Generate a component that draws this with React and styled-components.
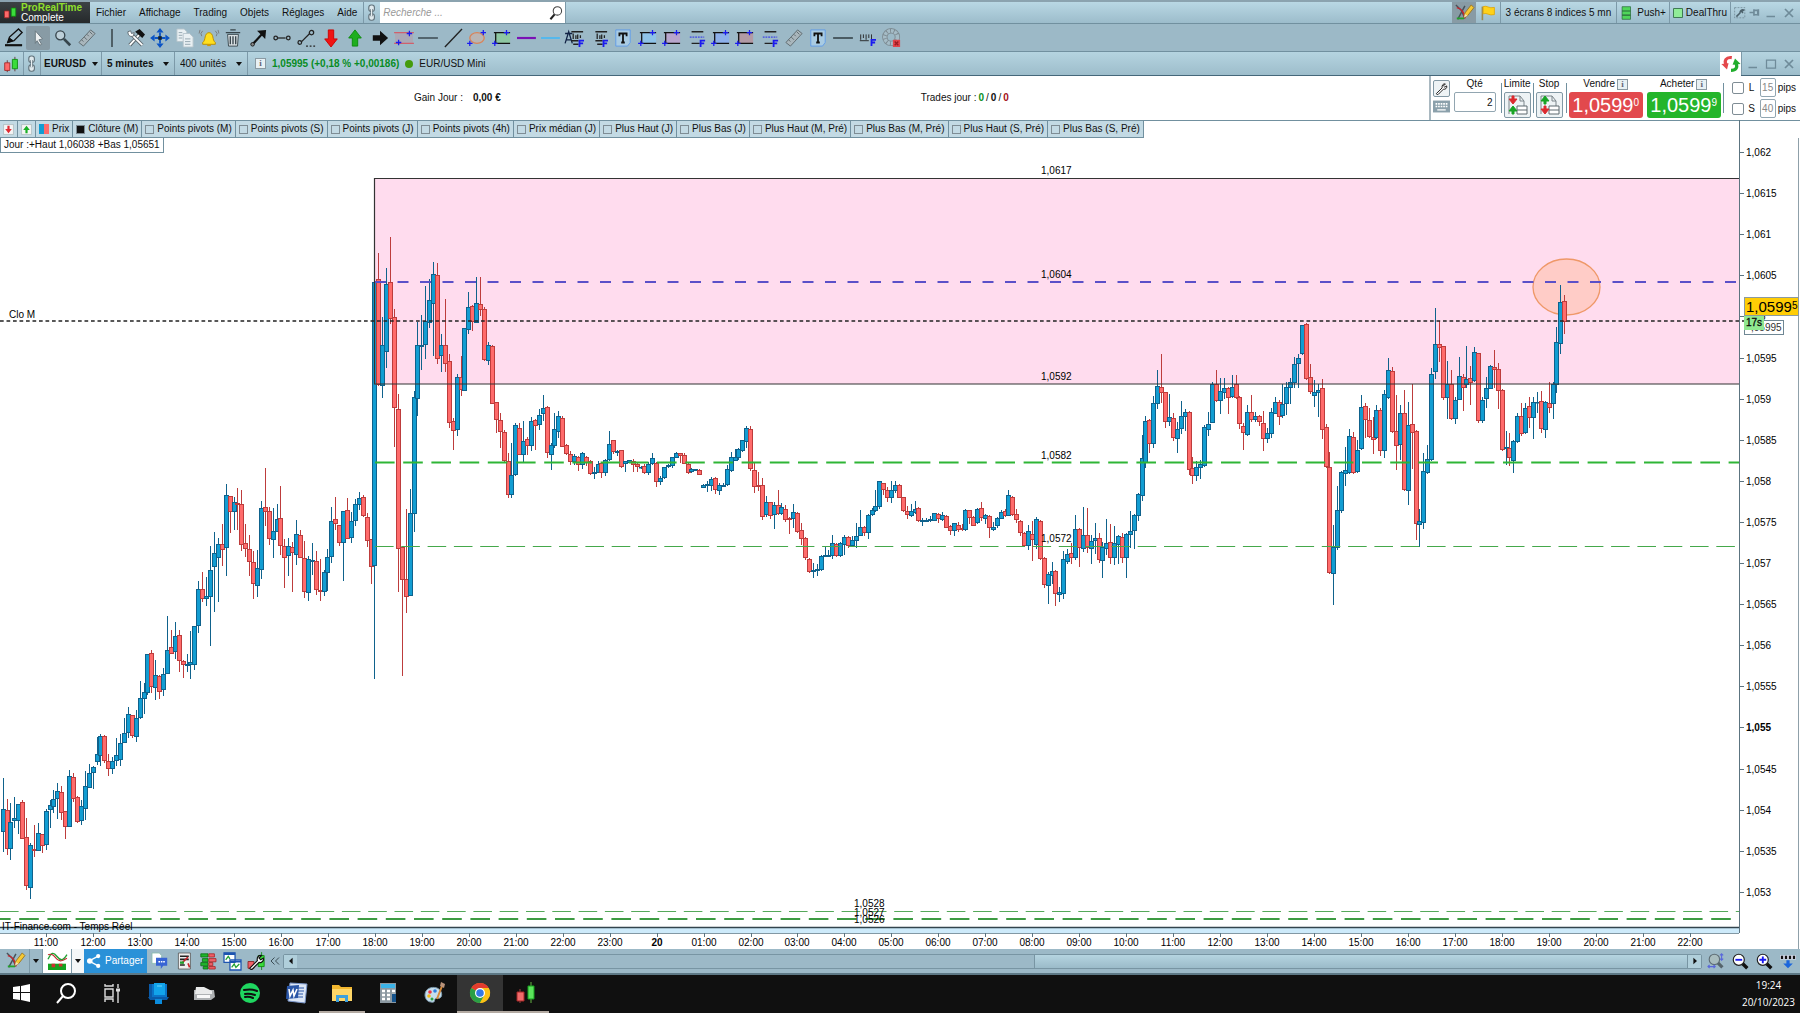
import React, { useState } from 'react';
import styled, { createGlobalStyle } from 'styled-components';

const GlobalStyle = createGlobalStyle`
  * { box-sizing: border-box; }
  body {
    margin: 0;
    background: #fff;
    color: #111;
    font: 10px/12px "Liberation Sans", Arial, sans-serif;
  }
  button, input, select {
    font: inherit;
    color: inherit;
    margin: 0;
    padding: 0;
    border: 0;
    border-radius: 0;
    background: none;
  }
  svg { display: block; overflow: visible; flex: none; }
`;

const Page = styled.div`
  min-height: 100vh;
  display: flex;
  flex-direction: column;
`;

const MenuBar = styled.header`
  display: flex;
  align-items: stretch;
  height: 24px;
  background: linear-gradient(#b9d8e4, #9cbccb);
  border-top: 2px solid #8ba3af;
  border-bottom: 1px solid #71909f;
`;

const Brand = styled.div`
  display: flex;
  align-items: center;
  gap: 3px;
  width: 90px;
  padding-left: 3px;
  background: linear-gradient(#3c4244, #25292b);
  color: #fff;
  line-height: 10px;
`;

const BrandName = styled.div`
  color: #8ede2c;
  font-weight: bold;
`;

const Menu = styled.nav`
  display: flex;
  align-items: center;
  gap: 13px;
  padding: 0 6px;
`;

const MenuLink = styled.a`
  color: #111;
  text-decoration: none;
`;

const Cell = styled.div`
  display: flex;
  align-items: center;
  gap: 3px;
  padding: 0 ${p => (p.$pad === undefined ? 3 : p.$pad)}px;
  border-left: 1px solid #7c99a8;
`;

const SearchBox = styled.label`
  display: flex;
  align-items: center;
  width: 186px;
  padding: 0 2px 0 3px;
  background: #fff;
  border-right: 1px solid #7c99a8;
`;

const SearchInput = styled.input`
  flex: 1;
  min-width: 0;
  outline: none;
  font-style: italic;
  &::placeholder { color: #999; opacity: 1; }
`;

const Spacer = styled.div`
  flex: 1;
`;

const IconButton = styled.button`
  display: flex;
  align-items: center;
  justify-content: center;
  flex: none;
  width: ${p => p.$w || 24}px;
  height: ${p => p.$h || 24}px;
  background: ${p => (p.$on ? '#889ba5' : 'none')};
  border-radius: ${p => (p.$round ? 2 : 0)}px;
`;

const MenuButton = styled(IconButton)`
  height: auto;
`;

const ToolBar = styled.div`
  height: 28px;
  background: #9cb9c7;
  border-bottom: 1px solid #71909f;
  padding: 2px;
`;

const Tools = styled.div`
  display: flex;
  justify-content: space-between;
  max-width: 902px;
`;

const ChartBar = styled.div`
  display: flex;
  align-items: stretch;
  height: 24px;
  background: linear-gradient(#b5d4e0, #9dbdcb);
  border-bottom: 1px solid #45677a;
`;

const Picker = styled.label`
  display: flex;
  align-items: center;
  gap: ${p => (p.$tight ? 5 : 9)}px;
  padding: 0 ${p => (p.$tight ? 3 : 5)}px;
  border-left: 1px solid #7c99a8;
`;

const PickerSelect = styled.select`
  appearance: none;
  font-weight: ${p => (p.$bold ? 'bold' : 'normal')};
  outline: none;
`;

const Caret = styled.span`
  width: 0;
  border: 3px solid transparent;
  border-top: 4px solid #111;
  border-bottom: 0;
`;

const InfoMark = styled.span`
  display: inline-flex;
  align-items: center;
  justify-content: center;
  width: 11px;
  height: 11px;
  border: 1px solid #8a9aa3;
  background: #e8f1f4;
  color: #667;
  font: bold 9px/9px "Liberation Serif", serif;
`;

const Quote = styled.div`
  display: flex;
  align-items: center;
  gap: 6px;
  padding-left: 7px;
  border-left: 1px solid #7c99a8;
`;

const Change = styled.b`
  color: #088c24;
`;

const Dot = styled.i`
  width: 8px;
  height: 8px;
  border-radius: 50%;
  background: #459c0c;
`;

const Refresh = styled(IconButton)`
  background: #fff;
  width: 21px;
`;

const TradeBar = styled.section`
  display: flex;
  height: 45px;
  border-bottom: 1px solid #71909f;
`;

const Stats = styled.div`
  flex: 1;
  display: flex;
  align-items: center;
`;

const Stat = styled.div`
  display: flex;
  gap: ${p => p.$gap}px;
  padding-left: ${p => p.$from}px;
`;

const Trades = styled.b`
  color: ${p => p.$color || '#111'};
`;

const Order = styled.form`
  display: flex;
  align-items: stretch;
  border-left: 2px solid #a9b8c0;
`;

const Column = styled.div`
  display: flex;
  flex-direction: column;
  align-items: center;
  gap: 2px;
  padding: ${p => p.$top || 2}px 2px 0;
  margin-right: ${p => p.$after || 0}px;
`;

const OrderLabel = styled.label`
  display: flex;
  align-items: center;
  gap: 2px;
`;

const QtyInput = styled.input`
  width: 42px;
  height: 20px;
  padding-right: 2px;
  border: 1px solid #92a6b1;
  border-radius: 2px;
  text-align: right;
`;

const SmallButton = styled(IconButton)`
  border: 1px solid #8298a4;
  border-radius: 2px;
  background: #eef3f5;
`;

const Rule = styled.div`
  width: 1px;
  margin: 7px 0;
  background: #71909f;
`;

const PriceButton = styled.button`
  width: 74px;
  height: 26px;
  border-radius: 3px;
  background: ${p => (p.$buy ? '#24b52b' : '#e2494d')};
  color: #fff;
  font-size: 20px;
  line-height: 26px;
  text-align: center;
  white-space: nowrap;
`;

const Tenth = styled.sup`
  font-size: 10px;
  line-height: 10px;
  vertical-align: 6px;
`;

const Limits = styled.div`
  display: flex;
  flex-direction: column;
  justify-content: center;
  gap: 2px;
  padding: 0 4px 0 8px;
`;

const LimitRow = styled.div`
  display: flex;
  align-items: center;
  gap: 2px;
`;

const Tick = styled.input`
  appearance: none;
  flex: none;
  width: ${p => p.$size || 9}px;
  height: ${p => p.$size || 9}px;
  border: 1px solid #7f8d95;
  border-radius: ${p => (p.$size ? 2 : 0)}px;
  background: ${p => p.$fill || 'transparent'};
  &:checked { background: ${p => p.$fill || '#111'}; }
`;

const LimitName = styled.label`
  width: 12px;
  text-align: center;
`;

const PipInput = styled.input`
  width: 16px;
  height: 19px;
  border: 1px solid #92a6b1;
  border-radius: 2px;
  color: #888;
  text-align: center;
`;

const Indicators = styled.div`
  display: flex;
  align-items: stretch;
  align-self: flex-start;
  height: 17px;
  background: #c3dae4;
  border-bottom: 1px solid #71909f;
`;

const Indicator = styled.label`
  display: flex;
  align-items: center;
  gap: 3px;
  padding: 0 3px;
  border-right: 1px solid #71909f;
  white-space: nowrap;
`;

const ArrowButton = styled(IconButton)`
  width: 18px;
  height: 16px;
  border-right: 1px solid #71909f;
`;

const ChartArea = styled.main`
  position: relative;
  flex: 1;
`;

const DayRange = styled.div`
  position: absolute;
  top: 0;
  left: 0;
  padding: 1px 3px;
  background: #fff;
  border: 1px solid #71909f;
  border-top: 0;
`;

const ChartSvg = styled.svg`
  width: 100%;
  height: auto;
  font: 10px "Liberation Sans", Arial, sans-serif;
`;

const BottomBar = styled.div`
  display: flex;
  align-items: center;
  height: 26px;
  background: #9cb9c7;
  border-bottom: 2px solid #5d7885;
`;

const DropButton = styled(IconButton)`
  width: 13px;
  background: ${p => (p.$light ? '#f4f7f8' : 'none')};
  border-left: 1px solid #7c99a8;
`;

const GraphButton = styled(IconButton)`
  width: 29px;
  background: #fff;
  border-left: 1px solid #7c99a8;
`;

const Share = styled.button`
  display: flex;
  align-items: center;
  gap: 4px;
  width: 63px;
  height: 24px;
  margin-right: 1px;
  padding-left: 3px;
  background: #2a91d8;
  color: #fff;
`;

const Scroll = styled.div`
  flex: 1;
  display: flex;
  height: 15px;
  margin: 0 2px 0 1px;
  border: 1px solid #7895a3;
  border-radius: 2px;
`;

const ScrollTrack = styled.div`
  flex: 1;
  display: flex;
  justify-content: flex-end;
`;

const ScrollThumb = styled.div`
  width: 47%;
  border: 1px solid #7895a3;
  border-width: 0 1px;
  background: linear-gradient(#b5d4e0, #9bbbc9);
`;

const ScrollButton = styled(IconButton)`
  width: 13px;
  height: 13px;
  background: #b0cfdb;
`;

const TaskBar = styled.footer`
  display: flex;
  align-items: stretch;
  height: 38px;
  padding-right: 5px;
  background: #101010;
  color: #fff;
`;

const Task = styled.button`
  display: flex;
  align-items: center;
  justify-content: center;
  width: 46px;
  background: ${p => (p.$active ? '#343434' : 'none')};
  border-bottom: 2px solid ${p => (p.$open ? '#b3aaa2' : 'transparent')};
  &:first-child { width: 43px; }
`;

const Clock = styled.div`
  display: flex;
  flex-direction: column;
  justify-content: center;
  text-align: center;
  font: 10px/17px "Open Sans", "Noto Sans", sans-serif;
`;

/* ---------- icons ---------- */

const Icon = ({ size = 20, children }) => (
  <svg width={size} height={size} viewBox="0 0 20 20" fill="none" aria-hidden="true">{children}</svg>
);

const blue = '#1a1af0';
const Plus = ({ x, y }) => <path d={`M${x - 3} ${y}h6M${x} ${y - 3}v6`} stroke={blue} strokeWidth="1.4" />;
const FMark = ({ x = 14, y = 12 }) => <path d={`M${x} ${y + 8}v-7h5M${x} ${y + 4}h4`} stroke={blue} strokeWidth="2" />;
const Ruler = () => (
  <g stroke="#5b666b">
    <path d="M1 15 14 1l5 4L6 19z" fill="#a9b6bc" />
    <path d="m4 12 2 2m1-5 3 3m0-6 2 2m1-5 3 3" />
  </g>
);
const TBox = () => (
  <g>
    <path d="M2 1h16v14l-3 4H2z" fill="#a9cbe2" stroke="#5f9bea" />
    <path d="M6 8V5h8v3M10 5v10m-2 0h4" stroke="#111" strokeWidth="2" />
  </g>
);
const Span = ({ fill }) => (
  <g>
    <path d="M2 4h17v12H2z" fill={fill} />
    <path d="M1 4h18M2 16h17M3 4v12" stroke="#111" strokeWidth="1.4" />
    <Plus x={15} y={4} /><Plus x={2} y={16} />
  </g>
);
const Fib = () => (
  <g>
    <path d="M4 3h13M4 16h9" stroke="#222" strokeWidth="1.6" />
    <path d="M2 9h16" stroke={blue} strokeDasharray="2 1" />
    <FMark />
  </g>
);
const Levels = ({ a }) => (
  <g>
    {a && <path d="m-1 16 4-13 4 13M-1 5h8M0 12h6" stroke="#124" strokeWidth="1.4" />}
    <path d="M6 3h13M6 13h8M8 17h6" stroke="#222" strokeWidth="1.6" />
    <path d="M8 5v6m3-4v4m2-5v5m3-4v3" stroke="#222" strokeWidth="1.4" />
    <FMark x={15} />
  </g>
);
const Bars = () => (
  <g>
    <path d="M5 5v14M14 1v17" stroke="#5a2c2c" />
    <path d="M2 8h6v9H2z" fill="#ff6a6a" stroke="#a32525" />
    <path d="M11 4h6v11h-6z" fill="#3bdc3b" stroke="#0c8a0c" />
  </g>
);
const Chain = () => (
  <g stroke="#60717a" strokeWidth="1.4" fill="#dfe9ed">
    <rect x="6" y="0" width="7" height="8" rx="3" />
    <rect x="6" y="11" width="7" height="8" rx="3" />
    <path d="M9.500 5v9" strokeWidth="3" />
    <path d="M9.500 5v9" stroke="#eef5f7" />
  </g>
);
const Compass = () => (
  <g>
    <path d="m1 1 6 6 4 9M11 2 3 17" stroke="#47525a" strokeWidth="1.6" />
    <path d="M2 4c5 1 8 5 9 12" stroke="#c3272e" strokeWidth="1.6" />
    <path d="M2 16h8" stroke="#22a32b" strokeWidth="2" />
    <path d="m10 15 1-5 7-9 3 3-7 9z" fill="#f6c932" stroke="#9a741d" />
    <path d="m10 15 1-4 3 2z" fill="#f7dfb9" />
  </g>
);
const Copy = () => (
  <g fill="#e9f0f3" stroke="#b4c3cb">
    <path d="M1 0h8l3 3v11H1z" /><path d="M8 5h7l4 4v11H8z" />
    <path d="M3 4h4m-4 3h4m-4 3h4m3 1h6m-6 3h6m-6 3h6" stroke="#8fa2ac" />
  </g>
);
const Wrench = () => (
  <path d="m3 17 8-8c-1-4 2-7 5-6l-3 3 2 2 3-2c1 3-2 6-5 5l-8 8c-2 1-4-1-2-2z" fill="#fff" stroke="#111" strokeWidth="1.4" />
);
const Zoom = ({ sign, faded }) => (
  <g opacity={faded ? 0.5 : 1}>
    <path d="m12 12 6 6" stroke="#111" strokeWidth="4" />
    <circle cx="8" cy="8" r="6.500" fill={faded ? '#b7c2b7' : '#fff'} stroke="#222" strokeWidth="1.4" />
    {sign && <path d={sign === '+' ? 'M4 8h8M8 4v8' : 'M4 8h8'} stroke={blue} strokeWidth="2.200" />}
    {faded && <path d="M17 1v8m-2-6 2-2 2 2m-4 4 2 2 2-2M0 17h9m-7-2-2 2 2 2m5-4 2 2-2 2" stroke={blue} strokeWidth="1.400" />}
  </g>
);

const tools = [
  ['Crayon', <g stroke="#111"><path d="m3 15 2-6 10-9 4 4-9 9z" strokeWidth="1.500" /><path d="m3 15 2-5 4 3z" fill="#111" /><path d="M0 18h19" strokeWidth="2.400" /></g>],
  ['Curseur', <path d="m7 2 8 9-4 1 3 5-2 1-3-5-2 3z" fill="#eef1f2" stroke="#66757d" />, true],
  ['Loupe', <g><circle cx="7" cy="7" r="5" fill="#bdd0d9" stroke="#37454c" strokeWidth="1.500" /><path d="m11 11 7 7" stroke="#37454c" strokeWidth="3" /></g>],
  ['Règle', <Ruler />],
  ['Séparateur', <path d="M10 0v20" stroke="#333d42" strokeWidth="1.600" />],
  ['Outils', <g><path d="m3 18 11-12" stroke="#555f64" strokeWidth="4" /><path d="m3 18 11-12" stroke="#fff" strokeWidth="2" /><path d="m9 3 5-3 6 6-3 4z" fill="#111" /><path d="m6 7 11 11" stroke="#5c686e" strokeWidth="4" /><path d="m6 7 11 11" stroke="#fff" strokeWidth="2" /><path d="M1 3c0 4 2 6 6 5l1-4-3 1-1-3z" fill="#fff" stroke="#5c686e" /></g>],
  ['Déplacer', <g fill="#0b54c5"><path d="M10 4v12M4 10h12" stroke="#0b54c5" strokeWidth="2" /><path d="M8 8h4v4H8z" fill="#123" /><path d="m10-1 4 5H6zM10 21l4-5H6zM-1 10l5-4v8zM21 10l-5-4v8z" /></g>],
  ['Copier', <Copy />],
  ['Alerte', <g><path d="M3 15c4-3 1-10 7-11 6 1 3 8 7 11v2H3z" fill="#ffdf1e" stroke="#b58a00" /><path d="M8 17h4v2H8z" fill="#d39b00" /><path d="M3 2 1 5l1 3M0 1l-1 4m18-3 2 3-1 3m2-7 1 4" stroke="#777" /></g>],
  ['Corbeille', <g><path d="M4 6h12l-1 13H5z" fill="#d8dfe2" stroke="#37444a" /><path d="M2 4h16M7 1h6M7 8v9m3-9v9m3-9v9" stroke="#37444a" strokeWidth="1.500" /></g>],
  ['Flèche', <g><path d="M4 17 16 4" stroke="#111" strokeWidth="2.400" /><path d="m9 2 10-1-1 10z" fill="#111" /><circle cx="4" cy="17" r="2" fill="#888" stroke="#111" /></g>],
  ['Segment', <g stroke="#222" strokeWidth="1.400"><path d="M5 10h9" /><circle cx="3" cy="10" r="2" /><circle cx="17" cy="10" r="2" /></g>],
  ['Demi-droite', <g stroke="#222" strokeWidth="1.400"><path d="m4 14 9-9" /><circle cx="2" cy="15" r="2" /><circle cx="15" cy="4" r="2.400" /><path d="M9 19h11" strokeDasharray="2 2" /></g>],
  ['Flèche baisse', <path d="M7 1h6v10h4l-7 9-7-9h4z" fill="#f01414" stroke="#c00" />],
  ['Flèche hausse', <path d="M7 19h6V10h4l-7-9-7 9h4z" fill="#1fae1f" stroke="#0a8a0a" />],
  ['Flèche droite', <path d="M2 7h8V2l9 8-9 8v-5H2z" fill="#111" />],
  ['Canal', <g><path d="M0 4h20v12H0z" fill="#aaa9b6" /><path d="M-1 4h22M-1 16h22" stroke="#d0606b" strokeWidth="1.500" /><Plus x={16} y={5} /><Plus x={4} y={15} /></g>],
  ['Horizontale', <path d="M-1 10h22" stroke="#37454c" strokeWidth="1.600" />],
  ['Oblique', <path d="M1 20 20 0" stroke="#222" strokeWidth="1.500" />],
  ['Ellipse', <g><ellipse cx="10" cy="10" rx="8" ry="6" stroke="#d8845a" strokeWidth="1.500" fill="#b9b5b4" /><Plus x={17} y={4} /><Plus x={2} y={16} /></g>],
  ['Rectangle vert', <Span fill="#8ec7a2" />],
  ['Ligne violette', <path d="M0 10h21" stroke="#7a12b5" strokeWidth="2.400" />],
  ['Ligne bleue', <path d="M0 10h21" stroke="#45b8f5" strokeWidth="1.800" />],
  ['Auto Fibonacci', <Levels a />],
  ['Niveaux', <Levels />],
  ['Texte', <TBox />],
  ['Zone bleue', <Span fill="#8fc3e8" />],
  ['Zone mauve', <Span fill="#b8a6cc" />],
  ['Fibonacci', <Fib />],
  ['Zone azur', <Span fill="#8db0ea" />],
  ['Zone brune', <Span fill="#b29aa5" />],
  ['Fibonacci 2', <Fib />],
  ['Règle 2', <Ruler />],
  ['Texte 2', <TBox />],
  ['Ligne', <path d="M-1 10h22" stroke="#37454c" strokeWidth="1.800" />],
  ['Cycles', <g><path d="M3 6v6m3-6v4m3-4v6m3-6v4m3-4v6" stroke="#222" /><path d="M2 13h10" stroke="#222" /><FMark x={15} y={11} /></g>],
  ['Effacer', <g><circle cx="9" cy="9" r="7" stroke="#7d8b92" strokeWidth="6" /><circle cx="9" cy="9" r="7" stroke="#a5bcc7" strokeWidth="4" strokeDasharray="3 1" /><path d="M11 12h8v8h-8z" fill="#e0444a" /><path d="m13 14 4 4m0-4-4 4" stroke="#9b1c22" strokeWidth="1.500" /></g>],
];

const tasks = [
  ['Démarrer', <path d="m1 4 7-1v6H1zm8-1 9-2v8H9zM1 10h7v7l-7-1zm8 0h9v9l-9-2z" fill="#fff" />],
  ['Rechercher', <g stroke="#fff" strokeWidth="2"><circle cx="12" cy="8" r="7" /><path d="m7 13-6 7" /></g>],
  ['Vue des tâches', <g stroke="#ddd" strokeWidth="1.400"><path d="M3 6h8v8H3zM3 1v2h8V1M3 19v-3h8v3M16 1v4m0 3v12" /><path d="M14 7h4" strokeWidth="3" /></g>],
  ['Téléphone', <g><path d="M3 1h16v15H3z" fill="#0a74c8" /><path d="M1 1h3v15H1zM0 14h21l-2 3H2z" fill="#0a5ba9" /><path d="M6 0h11v12H6z" fill="#12a4ea" /><path d="M7 16h7v5H7z" fill="#0b8bdb" /><path d="M9 3h5" stroke="#6fd5fa" /></g>],
  ['Imprimante', <g><path d="M0 7h20l1 7-4 3H0z" fill="#aeb1b3" /><path d="M2 4h8l8 4v3H1z" fill="#e9eaea" /><path d="M3 12h13v3H3z" fill="#f8f8f8" /></g>],
  ['Spotify', <g><circle cx="10" cy="10" r="10" fill="#1fd760" /><path d="M4 7c5-1 9-1 13 1M5 11c4-1 7 0 10 1M5 14c4-1 6 0 8 1" stroke="#101010" strokeWidth="2" strokeLinecap="round" /></g>],
  ['Word', <g><path d="m4 0 17 1-2 19-17-2z" fill="#dce6f6" stroke="#7995c8" /><path d="M12 5h6m-6 3h6m-6 3h5m-5 3h5" stroke="#2b57a8" /><path d="m1 3 12-1-1 13-12 1z" fill="#2b57a8" /><path d="m3 6 1 7 3-6 1 6 3-7" stroke="#fff" strokeWidth="1.600" /></g>],
  ['Explorateur', <g><path d="M0 2h7l2 2h11v14H0z" fill="#f3b72f" /><path d="M0 6h20v12H0z" fill="#ffd667" /><path d="M4 12h12v7h-3v-4H7v4H4z" fill="#3fa1dc" /></g>, 'open'],
  ['Calculatrice', <g><path d="M2 0h16v20H2z" fill="#8b98a1" /><path d="M3 1h14v4H3z" fill="#3bb3e8" /><path d="M4 8h3m2 0h3m2 0h3M4 12h3m2 0h3m2 0h3M4 16h3m2 0h3" stroke="#fff" strokeWidth="2.400" /><path d="M14 11h4v8h-4z" fill="#15538c" /></g>],
  ['Paint', <g><path d="M1 12C1 6 7 3 13 5c5 2 6 8 3 10-2 1-4-1-5 1s0 4-4 3c-4 0-6-4-6-7z" fill="#c6ddec" stroke="#7d9cb0" /><circle cx="6" cy="9" r="1.800" fill="#e34" /><circle cx="11" cy="8" r="1.800" fill="#2a7de0" /><circle cx="5" cy="13" r="1.800" fill="#f5b915" /><circle cx="8" cy="16" r="1.500" fill="#2aa545" /><path d="M13 16 18 3" stroke="#d58a3a" strokeWidth="2" /><path d="m16 3 1-4 4 2-1 4z" fill="#b9937a" /></g>],
  ['Chrome', <g><circle cx="10" cy="10" r="10" fill="#fbc116" /><path d="M10 10 1.300 5A10 10 0 0 1 18.700 5z" fill="#e33b2e" /><path d="M10 10 1.300 5A10 10 0 0 0 10 20l4-7z" fill="#2a9f47" /><path d="M18.700 5H10v5l4 3-4 7A10 10 0 0 0 18.700 5z" fill="#fbc116" /><circle cx="10" cy="10" r="5" fill="#fff" /><circle cx="10" cy="10" r="3.800" fill="#3278e6" /></g>, 'active'],
  ['ProRealTime', <g><path d="M4 6v14M15-1v21" stroke="#9b4040" /><path d="M1 9h7v9H1z" fill="#f06a6a" stroke="#a32525" /><path d="M15-1v21" stroke="#1f9b2a" /><path d="M12 3h6v13h-6z" fill="#5be35b" stroke="#14a01c" /></g>, 'open'],
];

/* ---------- chart ---------- */

// direction, high, body top, body bottom, low (one 5 minute bar each)
const BARS = `
u778,809,831,851 d799,810,848,854 u803,822,848,859 u797,818,820,827 u804,804,820,833 d800,802,838,838 d818,837,885,889 u843,845,887,898
d825,849,850,856 u823,833,850,850 d834,834,845,852 u809,811,844,849 u800,805,809,827 u790,799,806,812 u783,791,798,818 d786,792,812,819
d811,811,826,838 u770,776,826,826 d773,777,798,801 d796,797,821,822 u800,806,820,824 u771,786,808,819 u764,773,787,787 u766,767,772,788
u737,754,761,764 u734,736,755,765 d735,736,760,762 d754,761,768,775 u757,761,768,773 u738,755,760,765 u734,743,759,765 u718,733,742,742
u707,714,732,737 d715,715,735,737 u710,718,736,741 u681,698,717,718 u683,692,698,713 u654,654,692,694 d650,653,686,692 u660,675,687,699
d675,676,691,698 u668,674,689,695 u616,650,673,673 d630,647,653,653 u622,636,651,658 d630,635,660,671 d660,661,664,677 u654,664,665,671
u631,662,664,678 u626,626,664,669 u581,589,625,632 d572,589,598,601 u577,596,598,605 u546,570,596,645 u532,553,566,611 u538,544,557,601
d524,544,549,565 u484,495,547,575 d496,496,511,532 u497,502,511,529 d488,503,504,529 d490,504,544,550 d524,543,548,556 d535,549,561,575
d551,562,583,598 u550,568,585,596 u501,508,569,578 d468,507,511,525 d507,511,538,544 u508,531,539,557 u504,519,531,531 d486,518,545,554
d539,546,557,587 u538,546,555,575 d542,547,552,591 u520,534,554,564 d530,535,557,557 d541,558,591,597 u556,559,592,600 u543,560,561,574
d551,561,589,594 d559,590,591,600 u570,572,591,595 u549,557,572,590 u507,521,556,562 d497,519,523,529 d525,525,542,545 u511,511,542,580
d498,510,538,538 u512,521,537,542 u499,504,520,525 u492,498,504,509 d495,497,515,516 d513,517,540,546 d539,539,566,583 u282,282,565,678
d253,279,384,385 u317,345,385,397 u268,284,351,367 d237,282,318,323 d309,317,407,446 d394,409,548,591 d547,547,579,675 d509,579,596,612
u489,513,595,595 u391,397,513,531 u322,345,398,415 u315,345,346,369 u286,321,344,358 u279,300,322,327 u262,274,303,355 d263,275,358,363
u334,345,355,371 d299,345,363,371 d354,361,422,427 d418,421,430,449 u374,377,429,435 d356,377,389,395 u328,328,390,390 u292,307,329,333
d305,306,321,330 u277,303,322,322 d277,304,309,315 d307,309,359,360 u342,345,360,364 d345,346,403,403 d402,402,419,432 d413,420,431,447
d430,432,460,461 d453,461,494,497 u443,475,494,497 u423,425,474,475 d423,428,454,454 u421,441,454,462 d437,439,445,454 u417,421,445,450
d419,420,425,449 u409,415,424,429 u395,408,413,420 d406,407,452,457 u443,445,454,469 u413,429,445,447 u411,416,431,437 d416,418,446,446
d444,445,453,454 d451,454,461,464 u454,456,461,464 d456,457,464,470 u452,453,464,468 d456,457,462,465 d460,461,473,474 u467,472,473,478
u461,464,472,472 d462,463,472,477 u459,460,472,475 u431,444,459,460 d440,440,451,453 u450,451,452,455 d450,450,466,467 u461,461,463,471
u460,460,462,462 d459,461,464,471 d462,464,466,471 u466,467,467,468 d464,466,472,473 u462,464,472,474 u453,458,463,464 d462,463,481,486
u476,478,481,484 u467,467,477,478 u464,465,466,467 u457,457,465,467 u452,453,457,457 d453,453,455,462 d453,455,463,463 d463,464,472,473
u468,469,471,472 u469,469,470,470 d469,470,474,474 u484,485,487,487 u481,484,485,491 u477,479,485,490 d477,478,489,493 u483,485,490,494
u483,485,486,486 u465,469,484,485 u452,457,470,471 u449,457,460,460 u448,449,457,459 u440,440,450,451 u426,428,441,447 d426,429,468,470
d462,470,486,492 d472,485,486,490 d478,485,516,519 u496,502,514,516 d502,502,515,518 u502,505,514,528 d490,505,513,514 u503,507,513,514
d505,509,519,521 d517,518,519,533 u504,512,518,527 d512,513,531,532 d523,530,538,544 d537,538,557,559 d558,559,571,572 u563,570,571,577
u564,569,570,575 u555,556,569,570 u547,555,556,556 u550,555,556,556 u535,543,555,558 d543,544,555,556 u542,543,555,556 u535,537,544,554
d536,537,545,547 u536,540,545,546 u523,536,540,547 u510,527,535,535 d526,527,532,535 u514,515,532,538 u508,510,514,515 u490,506,510,511
u481,481,506,508 d483,483,489,494 d487,490,497,501 u481,490,497,502 u481,485,490,492 d484,485,497,497 d497,497,510,511 d506,511,514,518
u504,511,515,516 u501,509,512,513 d507,508,520,521 u518,520,521,525 u518,520,521,521 u516,519,520,521 u513,513,520,520 d513,514,518,522
u512,515,519,520 d515,516,527,527 d525,526,530,534 u523,523,530,535 d522,525,529,531 d524,528,529,530 u509,510,529,530 d510,510,517,523
d516,517,525,525 u508,509,522,523 d502,508,517,520 u514,515,518,523 d515,516,527,537 u522,527,529,530 u517,518,525,527 u510,512,518,518
d509,511,515,516 u490,495,515,515 d496,497,514,515 d509,514,519,522 d520,521,532,535 d532,533,545,546 u525,531,545,549 d521,534,539,560
u517,519,544,548 d520,521,558,559 d557,558,584,587 u572,574,585,603 u562,571,575,583 d570,571,593,605 u587,592,594,601 u551,559,593,598
u549,554,561,563 d543,553,557,563 u515,529,557,559 d528,529,547,566 u507,535,548,551 d508,535,547,552 u535,541,548,563 u523,538,540,553
d533,538,559,562 u542,547,560,577 u519,543,548,554 d524,542,557,563 u526,543,557,564 u535,536,544,563 d533,537,557,562 u533,534,557,577
u511,531,534,547 u514,515,530,548 u493,494,515,520 u435,458,495,500 u416,421,462,467 d419,420,443,452 u396,403,443,447 u370,386,403,408
d354,387,392,402 d392,392,421,427 u394,417,421,425 d413,418,437,440 u422,429,438,452 u401,416,428,433 u409,412,416,430 d411,412,469,474
d457,468,475,483 u461,467,475,480 u460,464,467,478 u425,427,465,466 u412,424,429,435 u382,384,422,422 d370,384,400,401 u378,391,400,413
u378,388,392,398 d387,388,397,413 u375,387,396,397 d375,384,397,398 d396,397,423,428 d423,426,432,449 u405,412,434,435 d395,412,419,421
u412,416,419,421 d415,416,421,425 d411,423,438,450 u428,433,438,442 u408,412,433,437 u397,402,413,413 d400,402,416,424 u384,404,415,417
u382,387,403,414 u378,382,387,403 u357,364,382,387 u354,358,363,387 u325,325,353,354 d323,324,378,379 d364,377,391,393 u380,392,395,406
u384,390,392,416 d379,388,429,438 d424,427,466,467 d452,467,572,573 u525,547,573,604 u486,510,547,549 u471,472,510,512 u447,470,473,485
u429,436,472,473 d432,437,472,473 u440,450,471,472 u395,407,448,449 d403,406,419,437 d408,420,436,437 d417,437,439,453 u405,410,437,438
d408,410,450,455 u390,394,450,457 u358,370,397,398 d367,371,431,432 d395,431,445,469 u405,413,444,459 d390,413,489,490 u402,425,490,504
d384,424,432,468 d430,431,523,539 u509,521,524,546 u453,471,522,528 u445,459,472,473 u368,374,459,460 u308,344,371,378 d321,344,347,361
d346,346,397,399 u361,384,397,418 d370,384,418,419 u397,400,418,423 u357,376,399,399 d374,377,387,410 u346,379,384,387 d366,378,382,404
u347,352,380,381 d353,353,420,422 u397,400,420,422 u377,388,398,407 u365,366,388,388 d350,367,369,387 d363,369,390,408 d389,390,449,450
u431,447,448,464 d433,448,457,465 u440,441,460,472 u413,416,441,442 d403,416,433,435 u403,408,432,433 d397,406,417,427 u397,402,417,438
u392,402,402,412 d391,401,428,432 u401,402,429,437 d382,403,407,412 u382,384,403,418 u327,342,384,392 u285,302,343,353 d295,301,321,333
`.trim().split(/\s+/).map(bar => [bar[0] === 'u', ...bar.slice(1).split(',').map(Number)]);

const STEP = 3.914;
const RIGHT = 1739;

const Candle = ({ index, bar }) => {
  const [up, high, top, bottom, low] = bar;
  const x = Math.round(2.6 + index * STEP);
  const stroke = up ? '#0f628c' : '#bd3c3c';
  return (
    <g stroke={stroke}>
      <path d={`M${x + 0.5} ${high}V${low + 1}`} />
      <rect x={x - 1.5} y={top + 0.5} width="4" height={Math.max(bottom - top, 0.5)} fill={up ? '#129dd2' : '#ff6b6b'} strokeWidth="1" />
    </g>
  );
};

const prices = ['1,062', '1,0615', '1,061', '1,0605', '1,06', '1,0595', '1,059', '1,0585', '1,058', '1,0575', '1,057', '1,0565', '1,056', '1,0555', '1,055', '1,0545', '1,054', '1,0535', '1,053'];
const hours = Array.from({ length: 36 }, (_, i) => {
  const h = (11 + i) % 24;
  return h === 0 ? '20' : `${String(h).padStart(2, '0')}:00`;
});
const levels = [
  ['1,0617', 1041, 174], ['1,0604', 1041, 278], ['1,0592', 1041, 380], ['1,0582', 1041, 459], ['1,0572', 1041, 542],
  ['1,0528', 854, 907], ['1,0527', 854, 916], ['1,0526', 854, 923],
];

const Chart = () => (
  <ChartSvg viewBox="0 138 1800 811" role="img" aria-label="EURUSD 5 minutes">
    <rect x="375" y="178" width={RIGHT - 375} height="206" fill="#ffdcee" />
    <ellipse cx="1566.500" cy="287" rx="33.500" ry="28" fill="#ffb48c" fillOpacity=".4" stroke="#ef9868" strokeWidth="1.300" />
    {BARS.map((bar, i) => <Candle key={i} index={i} bar={bar} />)}
    <path d={`M${RIGHT} 178.500H374.500V384H${RIGHT}`} fill="none" stroke="#333" strokeWidth="1.200" />
    <path d={`M375 282H${RIGHT}`} stroke="#5b50c8" strokeWidth="2" strokeDasharray="11 11.500" />
    <path d={`M0 321H${RIGHT + 6}`} stroke="#222" strokeWidth="1.300" strokeDasharray="3.700 2.800" />
    <path d={`M375 462.500H${RIGHT}`} stroke="#2fb536" strokeWidth="1.800" strokeDasharray="19.600 8.600" />
    <path d={`M375 546.500H${RIGHT}`} stroke="#45a84b" strokeDasharray="18.600 7.700" />
    <path d={`M0 911.500H${RIGHT}`} stroke="#55a85a" strokeDasharray="18.600 7.700" />
    <path d={`M0 919H${RIGHT}`} stroke="#3d9b42" strokeWidth="1.800" strokeDasharray="19.600 8.600" strokeDashoffset="9" />

    <rect x="0" y="928" width={RIGHT} height="5" fill="#cdeafa" />
    <path d={`M0 927.500H${RIGHT}`} stroke="#33444d" strokeWidth="1.400" />
    <path d={`M0 933.500H${RIGHT}`} stroke="#8298a4" />
    <path d={`M${RIGHT}.500 120V933`} stroke="#5c7480" />
    <path d="M1798.500 138V949" stroke="#8fa0a9" />

    {levels.map(([label, x, y]) => <text key={label} x={x} y={y}>{label}</text>)}
    <text x="9" y="318">Clo M</text>
    <text x="2" y="930">IT-Finance.com - Temps Réel</text>

    {prices.map((label, i) => {
      const y = Math.round(152 + i * 41.1);
      return (
        <g key={label}>
          <path d={`M${RIGHT} ${y}.500h5`} stroke="#5c7480" />
          <text x="1746" y={y + 4} fontWeight={label === '1,055' ? 'bold' : 'normal'}>{label}</text>
        </g>
      );
    })}
    {hours.map((label, i) => {
      const x = Math.round(46 + i * 12 * STEP);
      return (
        <g key={i}>
          <path d={`M${x}.500 933v4`} stroke="#5c7480" />
          <text x={x} y="946" textAnchor="middle" fontWeight={label === '20' ? 'bold' : 'normal'}>{label}</text>
        </g>
      );
    })}

    <rect x="1744.500" y="320.500" width="39" height="14" fill="#fff" stroke="#6f8794" />
    <text x="1751" y="331" fill="#333">,05995</text>
    <rect x="1744" y="316" width="20" height="14" fill="#90e890" />
    <text x="1746" y="326" stroke="#111" strokeWidth=".3">17s</text>
    <rect x="1744.500" y="297.500" width="54" height="18" fill="#ffcd05" stroke="#8b9aa0" />
    <text x="1746" y="312" fontSize="15">1,0599<tspan dy="-3" fontSize="10">5</tspan></text>
  </ChartSvg>
);

const indicators = ['Points pivots (M)', 'Points pivots (S)', 'Points pivots (J)', 'Points pivots (4h)', 'Prix médian (J)', 'Plus Haut (J)', 'Plus Bas (J)', 'Plus Haut (M, Pré)', 'Plus Bas (M, Pré)', 'Plus Haut (S, Pré)', 'Plus Bas (S, Pré)'];

const LimitIcon = ({ flip }) => (
  <g>
    <path d="M2 19V1h11l4 5v6M13 1v5h4" stroke="#7c868b" fill="none" />
    <path d="M10 11h10v8H10zM10 15h10" stroke="#5f6b71" fill="#fff" />
    <path d={flip ? 'm6 1 4 5H7v3H5V6H2z' : 'm6 9 4-5H7V1H5v3H2z'} fill={flip ? '#18a325' : '#dc2a2f'} stroke={flip ? '#18a325' : '#dc2a2f'} />
    <path d={flip ? 'm6 19 4-5H7v-3H5v3H2z' : 'm6 11 4 5H7v3H5v-3H2z'} fill={flip ? '#dc2a2f' : '#18a325'} stroke={flip ? '#dc2a2f' : '#18a325'} />
  </g>
);

const WindowIcons = ({ box }) => (
  <>
    <IconButton $w={15} $h={20} aria-label="Réduire"><Icon size={10}><path d="M1 17h17" stroke="#6f8b99" strokeWidth="3" /></Icon></IconButton>
    {box && <IconButton $w={15} $h={20} aria-label="Agrandir"><Icon size={10}><path d="M1 2h18v16H1z" stroke="#6f8b99" strokeWidth="2.500" /></Icon></IconButton>}
    <IconButton $w={16} $h={20} aria-label="Fermer"><Icon size={10}><path d="m2 2 16 16m0-16L2 18" stroke="#6f8b99" strokeWidth="3.500" /></Icon></IconButton>
  </>
);

export default function App() {
  const [symbol, setSymbol] = useState('EURUSD');
  const [qty, setQty] = useState('2');

  return (
    <Page>
      <GlobalStyle />
      <MenuBar>
        <Brand>
          <Icon size={15}><Bars /></Icon>
          <div>
            <BrandName>ProRealTime</BrandName>
            Complete
          </div>
        </Brand>
        <Menu>
          {['Fichier', 'Affichage', 'Trading', 'Objets', 'Réglages', 'Aide'].map(m => <MenuLink key={m} href="#">{m}</MenuLink>)}
        </Menu>
        <Cell $pad={0}><Icon size={16}><Chain /></Icon></Cell>
        <SearchBox>
          <SearchInput type="search" placeholder="Recherche ..." aria-label="Recherche" />
          <Icon size={14}><circle cx="12" cy="7" r="6" stroke="#444" strokeWidth="1.500" /><path d="m8 12-6 7" stroke="#222" strokeWidth="3" /></Icon>
        </SearchBox>
        <Spacer />
        <MenuButton $on aria-label="Dessin"><Icon size={18}><Compass /></Icon></MenuButton>
        <MenuButton aria-label="Drapeau"><Icon size={16}><path d="M3 2v17" stroke="#9a8a50" strokeWidth="2" /><path d="M4 2c5-2 7 3 14 1v9c-7 2-9-3-14-1z" fill="#ffd21a" stroke="#e0a500" /></Icon></MenuButton>
        <Cell $pad={5}>3 écrans 8 indices 5 mn</Cell>
        <Cell>
          <Icon size={14}><path d="M3 1h12v18H3z" fill="#4fd65a" stroke="#28683a" /><path d="M3 7h12M3 13h12" stroke="#28683a" strokeWidth="1.500" /></Icon>
          Push+
        </Cell>
        <Cell>
          <Icon size={10}><path d="M1 1h18v18H1z" fill="#90ec98" stroke="#3f7a55" strokeWidth="2" /></Icon>
          DealThru
        </Cell>
        <Cell>
          <Icon size={12}><path d="M1 1h17v17H1z" stroke="#5f7681" strokeDasharray="3 2" /><path d="m4 16 6-6c0-4 3-6 6-5l-3 3 2 2" stroke="#4c616b" strokeWidth="2.500" /></Icon>
          <Icon size={11}><path d="M1 10h8M9 4v12M9 6h7v8H9zM17 4v12" stroke="#6f8b99" strokeWidth="3" /></Icon>
          <WindowIcons />
        </Cell>
      </MenuBar>

      <ToolBar>
        <Tools>
          {tools.map(([name, art, on]) => (
            <IconButton key={name} $on={on} $round aria-label={name}><Icon size={18}>{art}</Icon></IconButton>
          ))}
        </Tools>
      </ToolBar>

      <ChartBar>
        <IconButton $w={23} aria-label="Chandeliers"><Icon size={17}><Bars /></Icon></IconButton>
        <Cell $pad={0}><Icon size={16}><Chain /></Icon></Cell>
        <Picker $tight>
          <PickerSelect $bold aria-label="Valeur" value={symbol} onChange={e => setSymbol(e.target.value)}><option>EURUSD</option></PickerSelect>
          <Caret />
        </Picker>
        <Picker>
          <PickerSelect $bold aria-label="Unité de temps"><option>5 minutes</option></PickerSelect>
          <Caret />
        </Picker>
        <Picker>
          <PickerSelect aria-label="Historique"><option>400 unités</option></PickerSelect>
          <Caret />
        </Picker>
        <Quote>
          <InfoMark>i</InfoMark>
          <Change>1,05995 (+0,18 % +0,00186)</Change>
          <Dot />
          EUR/USD Mini
        </Quote>
        <Spacer />
        <Refresh aria-label="Actualiser"><Icon size={16}><path d="M11 2C4 1 1 6 4 11" stroke="#e4484c" strokeWidth="4" /><path d="m-2 10 9-1-2 8z" fill="#e4484c" /><path d="M10 18c6 0 9-4 6-9" stroke="#20ad2c" strokeWidth="4" /><path d="m22 10-10 1 3-8z" fill="#20ad2c" /></Icon></Refresh>
        <Cell><WindowIcons box /></Cell>
      </ChartBar>

      <TradeBar>
        <Stats>
          <Stat $from={414} $gap={10}>Gain Jour : <b>0,00 €</b></Stat>
          <Stat $from={420} $gap={2}>Trades jour : <Trades $color="#0a8f1c">0</Trades>/<Trades>0</Trades>/<Trades $color="#a40f18">0</Trades></Stat>
        </Stats>
        <Order onSubmit={e => e.preventDefault()}>
          <Column $top={4}>
            <SmallButton type="button" $w={17} $h={17} aria-label="Réglages des ordres"><Icon size={13}><Wrench /></Icon></SmallButton>
            <IconButton type="button" $w={17} $h={14} aria-label="Clavier"><Icon size={17}><path d="M0 3h20v14H0z" fill="#8ba0ab" /><path d="M3 7h14M3 10h14" stroke="#fff" strokeWidth="2" strokeDasharray="2 1" /><path d="M5 14h10" stroke="#fff" strokeWidth="1.500" /></Icon></IconButton>
          </Column>
          <Column $after={3}>
            <OrderLabel htmlFor="qty">Qté</OrderLabel>
            <QtyInput id="qty" value={qty} onChange={e => setQty(e.target.value)} />
          </Column>
          <Rule />
          <Column>
            <OrderLabel as="span">Limite</OrderLabel>
            <SmallButton type="button" $w={27} $h={26} aria-label="Limite"><Icon size={20}><LimitIcon /></Icon></SmallButton>
          </Column>
          <Rule />
          <Column $after={1}>
            <OrderLabel as="span">Stop</OrderLabel>
            <SmallButton type="button" $w={27} $h={26} aria-label="Stop"><Icon size={20}><LimitIcon flip /></Icon></SmallButton>
          </Column>
          <Rule />
          <Column>
            <OrderLabel as="span">Vendre <InfoMark>i</InfoMark></OrderLabel>
            <PriceButton type="button">1,0599<Tenth>0</Tenth></PriceButton>
          </Column>
          <Column>
            <OrderLabel as="span">Acheter <InfoMark>i</InfoMark></OrderLabel>
            <PriceButton type="button" $buy>1,0599<Tenth>9</Tenth></PriceButton>
          </Column>
          <Rule />
          <Limits>
            {[['L', '15'], ['S', '40']].map(([name, pips]) => (
              <LimitRow key={name}>
                <Tick type="checkbox" id={`use${name}`} $size={12} $fill="#fff" />
                <LimitName htmlFor={`use${name}`}>{name}</LimitName>
                <PipInput aria-label={`${name} pips`} defaultValue={pips} />
                <span>pips</span>
              </LimitRow>
            ))}
          </Limits>
        </Order>
      </TradeBar>

      <Indicators>
        <ArrowButton aria-label="Descendre"><Icon size={11}><path d="M1 1h18v18H1z" fill="#f5f5f5" stroke="#9aa" /><path d="M8 3h4v6h4l-6 8-6-8h4z" fill="#e02c34" /></Icon></ArrowButton>
        <ArrowButton aria-label="Monter"><Icon size={11}><path d="M1 1h18v18H1z" fill="#f5f5f5" stroke="#9aa" /><path d="M8 17h4v-6h4l-6-8-6 8h4z" fill="#19b027" /></Icon></ArrowButton>
        <Indicator><Icon size={10}><path d="M0 0h10v20H0z" fill="#129dd2" /><path d="M10 0h10v20H10z" fill="#ff6b6b" /></Icon>Prix</Indicator>
        <Indicator><Tick type="checkbox" defaultChecked />Clôture (M)</Indicator>
        {indicators.map(name => (
          <Indicator key={name}><Tick type="checkbox" />{name}</Indicator>
        ))}
      </Indicators>

      <ChartArea>
        <Chart />
        <DayRange>Jour :+Haut 1,06038 +Bas 1,05651</DayRange>
      </ChartArea>

      <BottomBar>
        <IconButton $w={29} aria-label="Dessiner"><Icon size={18}><Compass /></Icon></IconButton>
        <DropButton aria-label="Options de dessin"><Caret /></DropButton>
        <GraphButton aria-label="Indicateurs"><Icon size={18}><path d="M0 8c4-8 6-8 10-3s7 5 11-2" stroke="#20a030" strokeWidth="1.500" /><path d="M0 3c5-2 7 2 10 5s6 2 11-1" stroke="#c03030" strokeWidth="1.300" /><path d="M0 13h20v7H0z" fill="#16a321" /><path d="M4 13h4v4H4zm8 0h4v3h-4z" fill="#d03030" /></Icon></GraphButton>
        <DropButton $light aria-label="Options d'indicateurs"><Caret /></DropButton>
        <Share>
          <Icon size={14}><path d="M16 3 3 10l13 7" stroke="#fff" strokeWidth="2" /><circle cx="16" cy="3" r="3" fill="#fff" /><circle cx="4" cy="10" r="4" fill="#fff" /><circle cx="16" cy="17" r="3" fill="#fff" /></Icon>
          Partager
        </Share>
        <IconButton aria-label="Messages"><Icon size={16}><path d="M0 0h9l3 3v10H0z" fill="#fff" stroke="#8ba" /><path d="M5 6h14v10h-5l-3 4v-4H5z" fill="#3864d4" /><path d="M8 11h9" stroke="#fff" strokeWidth="2" strokeDasharray="2 1" /></Icon></IconButton>
        <IconButton aria-label="Carnet"><Icon size={16}><path d="M3 0h15v20H3z" fill="#eee" stroke="#555" /><path d="M5 4h11M5 8h11M5 15h6" stroke="#222" strokeWidth="2" /><path d="m15 5-8 8m8 0 2 5" stroke="#c8232a" strokeWidth="2" /><path d="M5 12h5" stroke="#20a030" strokeWidth="3" /></Icon></IconButton>
        <IconButton aria-label="Profondeur"><Icon size={16}><path d="M1 1h9v4H1zM3 7h7v4H3zM1 12h9v4H1zM4 17h6v3H4z" fill="#20b52c" stroke="#0b6d12" /><path d="M11 1h7v4h-7zM11 7h9v4h-9zM11 12h5v4h-5zM11 17h8v3h-8z" fill="#f06068" stroke="#a32525" /></Icon></IconButton>
        <IconButton aria-label="Fenêtres"><Icon size={17}><path d="M0 0h13v11H0zM7 8h13v12H7z" fill="#fff" stroke="#1d54b0" strokeWidth="1.500" /><path d="M0 1h13M7 10h13" stroke="#1d54b0" strokeWidth="2.500" /><path d="m9 17 3-4 2 4 4-4M2 8l3-4 2 3" stroke="#20a030" strokeWidth="1.500" /></Icon></IconButton>
        <IconButton aria-label="Stratégies"><Icon size={17}><path d="M0 10h7v8H0z" fill="#f06068" stroke="#822" /><path d="M16-1v21" stroke="#0c8a0c" /><path d="M12 3h7v13h-7z" fill="#3bdc3b" stroke="#0c8a0c" /><Wrench /></Icon></IconButton>
        <IconButton $w={14} aria-label="Replier"><Icon size={10}><path d="m9 3-7 7 7 7M18 3l-7 7 7 7" stroke="#3c4d55" strokeWidth="2" /></Icon></IconButton>
        <Scroll>
          <ScrollButton aria-label="Reculer"><Icon size={8}><path d="m14 2-9 8 9 8z" fill="#111" /></Icon></ScrollButton>
          <ScrollTrack><ScrollThumb /></ScrollTrack>
          <ScrollButton aria-label="Avancer"><Icon size={8}><path d="m6 2 9 8-9 8z" fill="#111" /></Icon></ScrollButton>
        </Scroll>
        <IconButton aria-label="Zoom automatique"><Icon size={16}><Zoom faded /></Icon></IconButton>
        <IconButton aria-label="Zoom arrière"><Icon size={17}><Zoom sign="-" /></Icon></IconButton>
        <IconButton aria-label="Zoom avant"><Icon size={17}><Zoom sign="+" /></Icon></IconButton>
        <IconButton aria-label="Afficher l'axe"><Icon size={16}><path d="M0 3h20v5H0z" fill="#eef" /><path d="M1 5.500h19" stroke="#111" strokeWidth="4" strokeDasharray="3 2" /><path d="M8 9h4v4h4l-6 6-6-6h4z" fill="#1b66dc" /></Icon></IconButton>
      </BottomBar>

      <TaskBar>
        {tasks.map(([name, art, state]) => (
          <Task key={name} $active={state === 'active'} $open={!!state} aria-label={name}><Icon size={20}>{art}</Icon></Task>
        ))}
        <Spacer />
        <Clock><span>19:24</span><span>20/10/2023</span></Clock>
      </TaskBar>
    </Page>
  );
}
